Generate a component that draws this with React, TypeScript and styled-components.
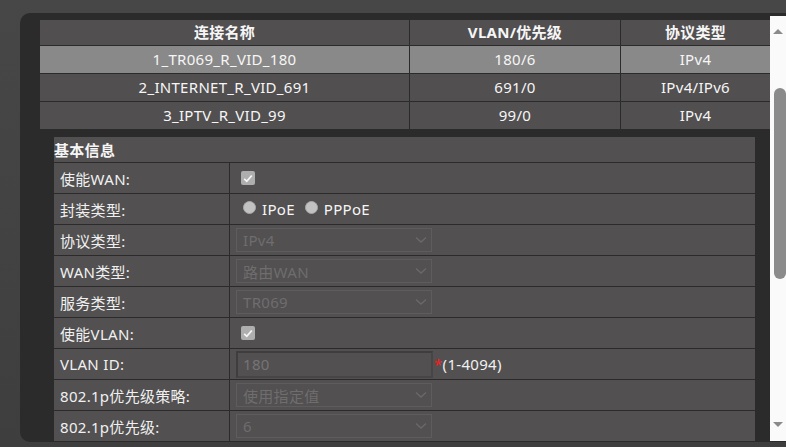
import React from "react";
import styled, { createGlobalStyle } from "styled-components";

const Global = createGlobalStyle`
  html, body { margin: 0; padding: 0; }
  body {
    background: linear-gradient(180deg, #474747 0%, #3e3e3e 100%);
    font-family: "Noto Sans", "Noto Sans CJK SC", sans-serif;
    font-size: 15px;
    letter-spacing: 0.3px;
    color: #f2f2f2;
    width: 786px;
    height: 447px;
    overflow: hidden;
  }
`;

const Page = styled.div`
  padding: 13px 0 0 20px;
  height: 447px;
  box-sizing: border-box;
`;

const Panel = styled.div`
  display: flex;
  height: 429px;
  background: #2b2b2b;
  border-radius: 10px 0 0 10px;
  overflow: hidden;
`;

const Content = styled.div`
  flex: 1;
  padding: 7px 0 0 20px;
  display: flex;
  flex-direction: column;
  gap: 7px;
  overflow: hidden;
`;

const ConnTable = styled.div`
  display: grid;
  grid-template-columns: 369px 210px 1fr;
  grid-auto-rows: 27px;
  grid-template-rows: 25px;
  gap: 1px;
  background: #2b2b2b;
  border-bottom: 1px solid #2b2b2b;
`;

const Cell = styled.div<{ $head?: boolean; $sel?: boolean }>`
  display: flex;
  align-items: center;
  justify-content: center;
  background: ${(p) => (p.$sel ? "#898989" : "#514f50")};
  font-weight: ${(p) => (p.$head ? 700 : 400)};
  color: #f6f6f6;
  line-height: 1;
`;

const Section = styled.div`
  margin: 0 15px 0 14px;
  display: grid;
  grid-template-columns: 175px 1fr;
  grid-template-rows: 25px;
  grid-auto-rows: 30px;
  gap: 1px;
  background: #2b2b2b;
`;

const SectionHead = styled.div`
  grid-column: 1 / -1;
  background: #525051;
  font-weight: 700;
  display: flex;
  align-items: center;
  color: #f6f6f6;
`;

const Label = styled.div`
  background: #525051;
  display: flex;
  align-items: center;
  padding-left: 6px;
  color: #f0f0f0;
`;

const Value = styled.div`
  background: #525051;
  display: flex;
  align-items: center;
  padding-left: 6px;
`;

const CheckBox = styled.span`
  width: 14px;
  height: 14px;
  margin-left: 5px;
  border-radius: 2px;
  background: #aeaeae;
  display: inline-flex;
  align-items: center;
  justify-content: center;
`;

const Radio = styled.span`
  width: 13px;
  height: 13px;
  border-radius: 50%;
  background: #c2c2c2;
  border: 1px solid #a9a9a9;
  box-sizing: border-box;
  display: inline-block;
  margin: -4px 6px 0 0;
`;

const RadioGroup = styled.div`
  display: flex;
  align-items: center;
  padding-left: 7px;
`;

const RadioText = styled.span`
  margin-right: 10px;
  color: #f6f6f6;
`;

const Select = styled.div`
  width: 196px;
  height: 24px;
  box-sizing: border-box;
  border: 1px solid #5e5c5d;
  display: flex;
  align-items: center;
  justify-content: space-between;
  padding: 0 4px 0 6px;
  color: #6f6d6e;
`;

const TextInput = styled.div`
  width: 197px;
  height: 27px;
  box-sizing: border-box;
  border: 2px solid #3f3d3e;
  border-right-color: #474546;
  border-bottom-color: #474546;
  display: flex;
  align-items: center;
  padding-left: 5px;
  color: #767475;
`;

const Star = styled.span`
  color: #ff1a1a;
  margin-left: 1px;
`;

const Hint = styled.span`
  color: #f0f0f0;
`;

const Scrollbar = styled.div`
  width: 16px;
  margin: 3px 0 1px 0;
  background: #fafafa;
  display: flex;
  flex-direction: column;
  align-items: center;
`;

const Arrow = styled.div<{ $down?: boolean }>`
  width: 0;
  height: 0;
  border-left: 5px solid transparent;
  border-right: 5px solid transparent;
  ${(p) =>
    p.$down
      ? "border-top: 5px solid #8a8a8a; margin-top: auto; margin-bottom: 14px;"
      : "border-bottom: 5px solid #8a8a8a; margin-top: 13px;"}
`;

const Thumb = styled.div`
  width: 12px;
  height: 191px;
  margin-top: 54px;
  margin-left: 4px;
  border-radius: 6px;
  background: #8b8b8b;
`;

const Chevron = () => (
  <svg width="12" height="8" viewBox="0 0 12 8">
    <path d="M1 1.5 L6 6 L11 1.5" fill="none" stroke="#6a6869" strokeWidth="1.4" />
  </svg>
);

const Check = () => (
  <svg width="10" height="9" viewBox="0 0 10 9">
    <path d="M1.2 4.8 L3.8 7.3 L8.8 1.5" fill="none" stroke="#f5f5f5" strokeWidth="1.8" />
  </svg>
);

const rows = [
  { name: "1_TR069_R_VID_180", vlan: "180/6", proto: "IPv4", sel: true },
  { name: "2_INTERNET_R_VID_691", vlan: "691/0", proto: "IPv4/IPv6", sel: false },
  { name: "3_IPTV_R_VID_99", vlan: "99/0", proto: "IPv4", sel: false },
];

export default function App() {
  return (
    <>
      <Global />
      <Page>
        <Panel>
          <Content>
            <ConnTable>
              <Cell $head>连接名称</Cell>
              <Cell $head>VLAN/优先级</Cell>
              <Cell $head>协议类型</Cell>
              {rows.map((r) => (
                <React.Fragment key={r.name}>
                  <Cell $sel={r.sel}>{r.name}</Cell>
                  <Cell $sel={r.sel}>{r.vlan}</Cell>
                  <Cell $sel={r.sel}>{r.proto}</Cell>
                </React.Fragment>
              ))}
            </ConnTable>
            <Section>
              <SectionHead>基本信息</SectionHead>
              <Label>使能WAN:</Label>
              <Value>
                <CheckBox>
                  <Check />
                </CheckBox>
              </Value>
              <Label>封装类型:</Label>
              <Value>
                <RadioGroup>
                  <Radio />
                  <RadioText>IPoE</RadioText>
                  <Radio />
                  <RadioText>PPPoE</RadioText>
                </RadioGroup>
              </Value>
              <Label>协议类型:</Label>
              <Value>
                <Select>
                  IPv4
                  <Chevron />
                </Select>
              </Value>
              <Label>WAN类型:</Label>
              <Value>
                <Select>
                  路由WAN
                  <Chevron />
                </Select>
              </Value>
              <Label>服务类型:</Label>
              <Value>
                <Select>
                  TR069
                  <Chevron />
                </Select>
              </Value>
              <Label>使能VLAN:</Label>
              <Value>
                <CheckBox>
                  <Check />
                </CheckBox>
              </Value>
              <Label>VLAN ID:</Label>
              <Value>
                <TextInput>180</TextInput>
                <Star>*</Star>
                <Hint>(1-4094)</Hint>
              </Value>
              <Label>802.1p优先级策略:</Label>
              <Value>
                <Select>
                  使用指定值
                  <Chevron />
                </Select>
              </Value>
              <Label>802.1p优先级:</Label>
              <Value>
                <Select>
                  6
                  <Chevron />
                </Select>
              </Value>
            </Section>
          </Content>
          <Scrollbar>
            <Arrow />
            <Thumb />
            <Arrow $down />
          </Scrollbar>
        </Panel>
      </Page>
    </>
  );
}
